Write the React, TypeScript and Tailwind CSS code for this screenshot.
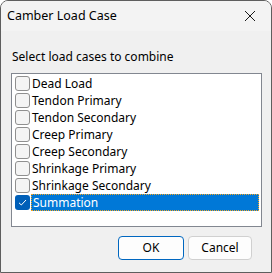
import React from 'react';

const loadCases = [
  { id: 'dead', label: 'Dead Load', checked: false },
  { id: 'tp', label: 'Tendon Primary', checked: false },
  { id: 'ts', label: 'Tendon Secondary', checked: false },
  { id: 'cp', label: 'Creep Primary', checked: false },
  { id: 'cs', label: 'Creep Secondary', checked: false },
  { id: 'sp', label: 'Shrinkage Primary', checked: false },
  { id: 'ss', label: 'Shrinkage Secondary', checked: false },
  { id: 'sum', label: 'Summation', checked: true },
];

const CheckBox: React.FC<{ checked: boolean }> = ({ checked }) =>
  checked ? (
    <div className="w-[15px] h-[15px] rounded-[3px] bg-[#005fb8] flex items-center justify-center shrink-0">
      <svg width="11" height="11" viewBox="0 0 11 11" fill="none">
        <path d="M2 5.8 L4.3 8 L9 3" stroke="white" strokeWidth="1" />
      </svg>
    </div>
  ) : (
    <div className="w-[15px] h-[15px] rounded-[3px] border border-[#8f8f8f] bg-[#f4f4f4] shrink-0" />
  );

const App: React.FC = () => {
  return (
    <div
      className="w-[272px] h-[273px] bg-[#f0f0f0] border border-[#5e5e5e] rounded-t-[8px] overflow-hidden flex flex-col text-black text-[12px]"
      style={{ fontFamily: '"Noto Sans", "Liberation Sans", sans-serif' }}
    >
      <div className="h-[30px] bg-[#f3f3f3] flex items-center justify-between pl-[6px] pr-[15px] shrink-0">
        <span className="text-[12.5px] leading-none">Camber Load Case</span>
        <svg width="12" height="12" viewBox="0 0 12 12">
          <path d="M1 1 L11 11 M11 1 L1 11" stroke="#1a1a1a" strokeWidth="1" />
        </svg>
      </div>

      <div className="flex flex-col pl-[10px] pr-[9px]">
        <div className="h-[42px] flex items-center pl-[1px] pt-[10px] leading-none">
          Select load cases to combine
        </div>

        <div className="h-[154px] border border-[#828790] bg-white pt-[1px] pl-[3px] pr-[2px]">
          {loadCases.map((c) => (
            <div key={c.id} className="h-[17px] flex items-center">
              <CheckBox checked={c.checked} />
              <div
                className={`flex-1 h-full flex items-center pl-[1px] ml-[1px] leading-none ${
                  c.checked ? 'bg-[#0078d7] text-white border border-dotted border-[#f5a623]' : ''
                }`}
              >
                {c.label}
              </div>
            </div>
          ))}
        </div>

        <div className="flex justify-end gap-[4px] pt-[9px] pr-[10px]">
          <button className="w-[66px] h-[24px] rounded-[4px] border border-[#0067c0] bg-[#fdfdfd] leading-none">
            OK
          </button>
          <button className="w-[64px] h-[24px] rounded-[4px] border border-[#d0d0d0] bg-[#fdfdfd] leading-none">
            Cancel
          </button>
        </div>
      </div>
    </div>
  );
};

export default App;
